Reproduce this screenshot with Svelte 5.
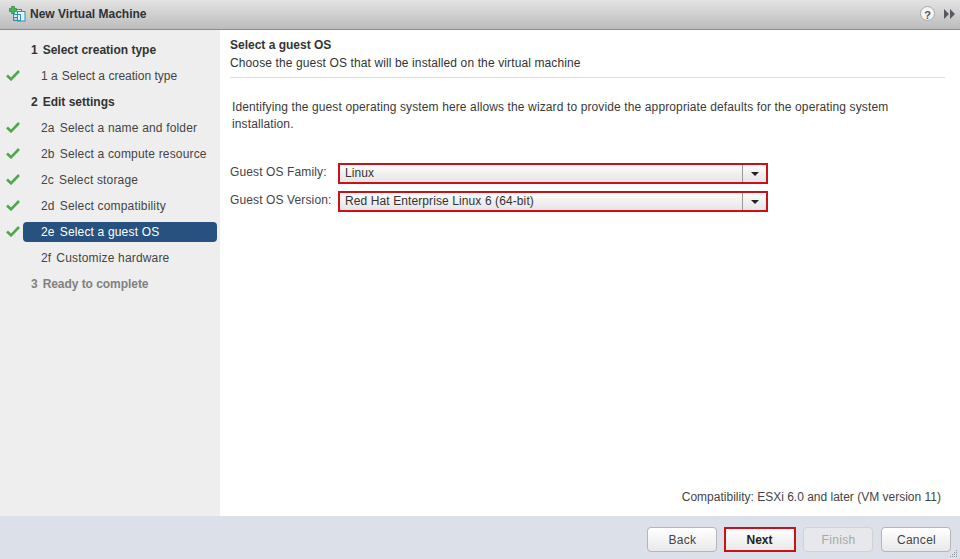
<script>
  const steps = [
    { label: '1', text: 'Select creation type', kind: 'head' },
    { label: '1 a', text: 'Select a creation type', done: true, tight: true },
    { label: '2', text: 'Edit settings', kind: 'head' },
    { label: '2a', text: 'Select a name and folder', done: true },
    { label: '2b', text: 'Select a compute resource', done: true },
    { label: '2c', text: 'Select storage', done: true },
    { label: '2d', text: 'Select compatibility', done: true },
    { label: '2e', text: 'Select a guest OS', done: true, active: true },
    { label: '2f', text: 'Customize hardware' },
    { label: '3', text: 'Ready to complete', kind: 'head', muted: true }
  ];
  const fields = [
    { label: 'Guest OS Family:', value: 'Linux' },
    { label: 'Guest OS Version:', value: 'Red Hat Enterprise Linux 6 (64-bit)' }
  ];
  const grip = [[7,0],[5,2],[7,2],[3,4],[5,4],[7,4],[1,6],[3,6],[5,6],[7,6]];
</script>

<div class="win">
  <header class="titlebar">
    <svg class="vm" width="17" height="16" viewBox="0 0 17 16" aria-hidden="true">
      <rect x="4.500" y="3.500" width="8" height="8" fill="#d5ebf5" stroke="#2c8fbc"/>
      <rect x="8.500" y="5.500" width="7.500" height="9.500" fill="#e6f4fa" stroke="#2c8fbc"/>
      <rect x="4.500" y="8.500" width="7" height="6" fill="none" stroke="#2c8fbc"/>
      <path d="M2.500 .5h3v2h2v3h-2v2h-3v-2h-2v-3h2z" fill="#49b35a" stroke="#1f8a3c" stroke-width=".7"/>
    </svg>
    <span class="wintitle">New Virtual Machine</span>
    <span class="help">?</span>
    <svg class="more" width="11" height="10" viewBox="0 0 11 10" aria-hidden="true">
      <path d="M0 0l5 5-5 5zM6 0l5 5-5 5z" fill="#55585c"/>
    </svg>
  </header>

  <div class="body">
    <nav class="side">
      {#each steps as s}
        <div class="row">
          <span class="tick">
            {#if s.done}
              <svg width="14" height="12" viewBox="0 0 14 12" aria-hidden="true">
                <path d="M1 6.500l4 3.800L13 2" fill="none" stroke="#4ea84a" stroke-width="2.600"/>
              </svg>
            {/if}
          </span>
          <div class="step" class:head={s.kind === 'head'} class:active={s.active} class:muted={s.muted} class:tight={s.tight}>
            <span class="num">{s.label}</span><span>{s.text}</span>
          </div>
        </div>
      {/each}
    </nav>

    <main class="content">
      <h1>Select a guest OS</h1>
      <p class="sub">Choose the guest OS that will be installed on the virtual machine</p>
      <p class="intro">Identifying the guest operating system here allows the wizard to provide the appropriate defaults for the operating system installation.</p>
      <div class="form">
        {#each fields as f}
          <div class="field">
            <span class="flabel">{f.label}</span>
            <div class="select">
              <span class="value">{f.value}</span>
              <span class="arrow"><i></i></span>
            </div>
          </div>
        {/each}
      </div>
      <p class="compat">Compatibility: ESXi 6.0 and later (VM version 11)</p>
    </main>
  </div>

  <footer class="foot">
    <button>Back</button>
    <button class="next">Next</button>
    <button class="off">Finish</button>
    <button>Cancel</button>
    <svg class="grip" width="9" height="8" viewBox="0 0 9 8" aria-hidden="true">
      {#each grip as [x, y]}
        <rect {x} {y} width="1" height="1" fill="#8f949c"/>
      {/each}
    </svg>
  </footer>
</div>

<style>
  :global(body) { margin: 0; background: #fff; }
  .win {
    width: 960px; height: 559px; display: flex; flex-direction: column; overflow: hidden;
    font: 12px/16px "Liberation Sans", Arial, sans-serif; color: #333; letter-spacing: .12px;
  }
  .titlebar {
    flex: none; display: flex; align-items: center; box-sizing: content-box;
    padding: 0 5px 2px 9px; height: 27px; border-bottom: 1px solid #8c8c8c;
    background: linear-gradient(#e3e3e3, #bcbcbc);
  }
  .vm { margin: 0 4px 0 0; }
  .wintitle { font-weight: bold; color: #2e3338; letter-spacing: 0; flex: 1; }
  .help {
    width: 13px; height: 13px; border-radius: 50%; background: #f4f4f4; border: 1px solid #a8a8a8;
    display: grid; place-items: center; font-weight: bold; font-size: 11px; color: #555; margin-right: 9px; letter-spacing: 0;
  }
  .body { flex: 1; display: flex; min-height: 0; }
  .side { width: 220px; flex: none; background: #eeeeee; padding-top: 7px; box-sizing: border-box; }
  .row { height: 26px; display: flex; align-items: center; }
  .tick { width: 23px; flex: none; padding: 0 0 2px 6px; box-sizing: border-box; display: flex; }
  .step {
    width: 194px; height: 20px; display: flex; align-items: center; box-sizing: border-box;
    padding-left: 18px; border-radius: 4px; color: #444; letter-spacing: .17px;
  }
  .step .num { margin-right: 5px; }
  .step.tight { letter-spacing: 0; }
  .step.tight .num { margin-right: 4px; letter-spacing: 0; }
  .step.head { padding-left: 8px; font-weight: bold; color: #333; letter-spacing: 0; }
  .step.head .num { margin-right: 5px; }
  .step.active { background: #27527f; color: #fff; }
  .step.muted { color: #808080; letter-spacing: -.05px; }
  .content { flex: 1; position: relative; padding: 7px 15px 0 10px; display: flex; flex-direction: column; }
  h1 { margin: 0; font-size: 12px; line-height: 16px; font-weight: bold; color: #333; letter-spacing: 0; }
  .sub { margin: 2px 0 0; padding-bottom: 6px; border-bottom: 1px solid #dedede; height: 16px; }
  .intro { margin: 21px 0 0 2px; line-height: 17px; color: #3a3a3a; width: 690px; letter-spacing: .12px; }
  .form { margin-top: 30px; display: flex; flex-direction: column; gap: 7px; }
  .field { display: flex; align-items: center; height: 21px; }
  .flabel { width: 108px; flex: none; margin-top: -3px; color: #444; letter-spacing: .12px; }
  .select {
    width: 430px; height: 21px; box-sizing: border-box; border: 2px solid #cc1018;
    background: linear-gradient(#fff, #f0f0f0 50%, #e6e6e6); display: flex; align-items: center; padding: 0 0 2px 5px;
  }
  .value { flex: 1; color: #333; letter-spacing: .1px; }
  .arrow { width: 23px; height: calc(100% + 2px); margin-bottom: -2px; border-left: 1px solid #999; display: grid; place-items: center; }
  .arrow i { width: 0; height: 0; border: 4px solid transparent; border-top: 4px solid #222; border-bottom: 0; }
  .compat { margin: auto 4px 11px 0; text-align: right; color: #444; letter-spacing: 0; }
  .foot {
    height: 43px; flex: none; box-sizing: border-box; background: #dce0e8; position: relative;
    display: flex; padding: 11px 9px 0 0; justify-content: flex-end; gap: 7px;
  }
  button {
    width: 70px; height: 25px; padding: 0 0 0 1px; box-sizing: border-box; border: 1px solid #b5b5b5; border-radius: 4px;
    background: linear-gradient(#fff, #e9e9e9); font: inherit; letter-spacing: .3px; color: #444;
  }
  .next { width: 72px; padding: 0 1px 0 0; border: 2px solid #cc1018; border-radius: 0; font-weight: bold; color: #222; letter-spacing: 0; }
  .off { background: #e6e8ec; border-color: #cfd2d6; color: #a8a8a8; margin-right: 1px; }
  .grip { position: absolute; right: 2px; bottom: 1px; }
</style>
